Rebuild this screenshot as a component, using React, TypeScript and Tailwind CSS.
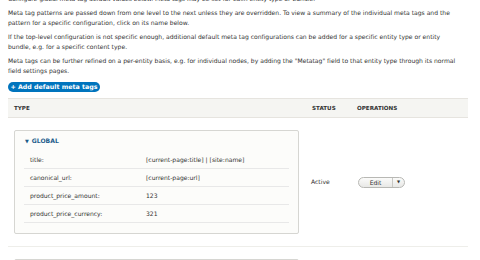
import React from "react";

const font = { fontFamily: '"DejaVu Sans", "Noto Sans", sans-serif' };

function Row({ label, value }: { label: string; value: string }) {
  return (
    <div className="flex h-[18px] items-center border-b border-[#e8e8e8] px-[6px]">
      <div className="w-[116px] shrink-0">{label}</div>
      <div>{value}</div>
    </div>
  );
}

export default function App() {
  return (
    <div
      className="w-[480px] h-[260px] overflow-hidden bg-white px-[8px] text-[6.05px] leading-[10px] text-[#333]"
      style={font}
    >
      <p className="mt-[-6px] whitespace-nowrap">
        Configure global meta tag default values below. Meta tags may be set for each entity type or bundle.
      </p>
      <p className="mt-[4px] whitespace-nowrap">
        Meta tag patterns are passed down from one level to the next unless they are overridden. To view a summary of the individual meta tags and the
        <br />
        pattern for a specific configuration, click on its name below.
      </p>
      <p className="mt-[4px] whitespace-nowrap">
        If the top-level configuration is not specific enough, additional default meta tag configurations can be added for a specific entity type or entity
        <br />
        bundle, e.g. for a specific content type.
      </p>
      <p className="mt-[4px] whitespace-nowrap">
        Meta tags can be further refined on a per-entity basis, e.g. for individual nodes, by adding the "Metatag" field to that entity type through its normal
        <br />
        field settings pages.
      </p>
      <div className="mt-[6px] flex">
        <div className="flex h-[10px] w-[92px] items-center justify-center rounded-full bg-[#0074bd] text-[6.3px] font-bold text-white">
          + Add default meta tags
        </div>
      </div>
      <div className="mt-[6px] w-[460px]">
        <div className="flex h-[20px] items-center border-y border-[#e6e4df] bg-[#f5f5f2] text-[5.6px] font-bold uppercase">
          <div className="w-[298px] pl-[6px]">Type</div>
          <div className="w-[47px] pl-[6px]">Status</div>
          <div className="pl-[4px]">Operations</div>
        </div>
        <div className="flex items-center border-b border-[#eeeeea] py-[12px]">
          <div className="ml-[6px] w-[285px] rounded-[2px] border border-[#d6d6d2] bg-[#fcfcfa] px-[9px] pb-[10px]">
            <div className="flex h-[20px] items-center pl-[1px] font-bold text-[#1b5b8a]">
              <span className="mr-[3px] text-[5px]">▼</span>GLOBAL
            </div>
            <Row label="title:" value="[current-page:title] | [site:name]" />
            <Row label="canonical_url:" value="[current-page:url]" />
            <Row label="product_price_amount:" value="123" />
            <Row label="product_price_currency:" value="321" />
          </div>
          <div className="ml-[12px] w-[47px]">Active</div>
          <div className="flex h-[11px] items-center rounded-full border border-[#b8b8b4] bg-gradient-to-b from-[#fbfbfa] to-[#e8e8e6]">
            <div className="w-[33px] text-center leading-[9px]">Edit</div>
            <div className="flex h-full w-[12px] items-center justify-center border-l border-[#c8c8c4] text-[4px]">▼</div>
          </div>
        </div>
        <div className="mt-[12px] ml-[6px] h-[20px] w-[285px] rounded-[2px] border border-[#d6d6d2] bg-[#fcfcfa]"></div>
      </div>
    </div>
  );
}
